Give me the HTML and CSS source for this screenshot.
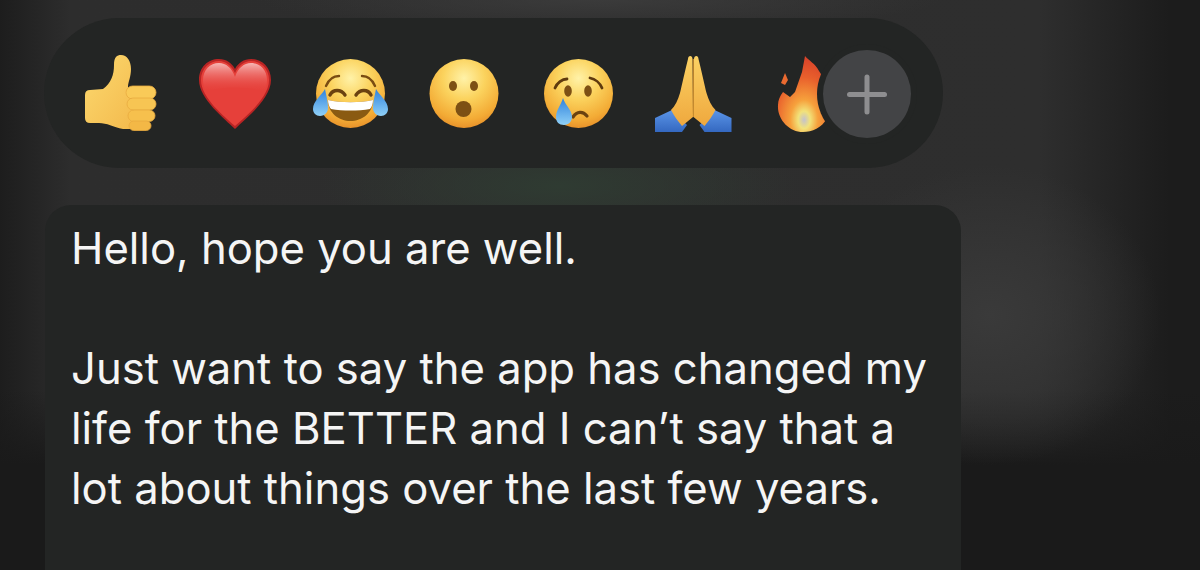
FILE: index.html
```html
<!DOCTYPE html>
<html lang="en">
<head>
<meta charset="UTF-8">
<title>Message reactions</title>
<link rel="stylesheet" href="styles.css">
</head>
<body>
<svg class="defs" width="0" height="0" aria-hidden="true">
  <defs>
    <radialGradient id="face" cx="50%" cy="28%" r="75%">
      <stop offset="0" stop-color="#fff2a8"/>
      <stop offset=".4" stop-color="#fbd35e"/>
      <stop offset=".8" stop-color="#f3ab35"/>
      <stop offset="1" stop-color="#e58c28"/>
    </radialGradient>
    <linearGradient id="tear" x1="0" y1="0" x2="0" y2="1">
      <stop offset="0" stop-color="#2f82dc"/>
      <stop offset="1" stop-color="#8fd0f7"/>
    </linearGradient>
    <linearGradient id="shine" x1="0" y1="0" x2="0" y2="1">
      <stop offset="0" stop-color="#f6b6b4"/>
      <stop offset="1" stop-color="#e8453f" stop-opacity="0"/>
    </linearGradient>
    <linearGradient id="skin" x1="0" y1="0" x2="1" y2="1">
      <stop offset="0" stop-color="#fcd96f"/>
      <stop offset="1" stop-color="#f3b94c"/>
    </linearGradient>
    <linearGradient id="palm" x1="0" y1="0" x2="0" y2="1">
      <stop offset="0" stop-color="#fbd264"/>
      <stop offset="1" stop-color="#efa83e"/>
    </linearGradient>
    <linearGradient id="sleeve" x1="0" y1="0" x2="0" y2="1">
      <stop offset="0" stop-color="#5b95e8"/>
      <stop offset="1" stop-color="#3468c0"/>
    </linearGradient>
    <radialGradient id="flame" cx="50%" cy="84%" r="82%">
      <stop offset="0" stop-color="#c4c2cc"/>
      <stop offset=".14" stop-color="#f2e27a"/>
      <stop offset=".32" stop-color="#f6a13c"/>
      <stop offset=".68" stop-color="#e9602c"/>
      <stop offset="1" stop-color="#d9432a"/>
    </radialGradient>
  </defs>
</svg>

<div class="reaction-tray">
  <div class="emoji">
    <svg viewBox="0 0 80 80">
      <path d="M4 42Q4 37 9 37L22 36C30 30 33 22 33 12C33 4 36 2 40 2C46 2 50 8 50 16C50 24 47 29 47 34L56 76L42 76C32 74 26 70 18 70L9 70Q4 70 4 65Z" fill="url(#skin)"/>
      <rect x="45" y="33" width="30" height="13" rx="6.500" fill="#f9ca58" stroke="#e9ab40" stroke-width=".8"/>
      <rect x="46" y="45" width="29" height="12" rx="6" fill="#f7c553" stroke="#e9ab40" stroke-width=".8"/>
      <rect x="47" y="57" width="27" height="11.500" rx="5.700" fill="#f6c04d" stroke="#e9ab40" stroke-width=".8"/>
      <rect x="48" y="68" width="22" height="9.500" rx="4.700" fill="#f3b846" stroke="#e9ab40" stroke-width=".8"/>
    </svg>
  </div>
  <div class="emoji">
    <svg viewBox="0 0 80 80">
      <path d="M40 76C30 66 4 46 4 27C4 14 13 6 24 6C31 6 37 10 40 16C43 10 49 6 56 6C67 6 76 14 76 27C76 46 50 66 40 76Z" fill="#b82424"/>
      <path d="M40 73C30 64 6 45 6 27C6 15 15 8 24 8C31 8 37 13 40 20C43 13 49 8 56 8C65 8 74 15 74 27C74 45 50 64 40 73Z" fill="#e6403a"/>
      <path d="M40 24C37 15 31 10 24 10C15 10 8 17 8 27C8 31 9 35 11 39C22 33 58 33 69 39C71 35 72 31 72 27C72 17 65 10 56 10C49 10 43 15 40 24Z" fill="url(#shine)"/>
    </svg>
  </div>
  <div class="emoji">
    <svg viewBox="0 0 80 80">
      <circle cx="40.500" cy="40.500" r="34.500" fill="url(#face)"/>
      <path d="M16 33C19 26 24 23 29 23M65 33C62 26 57 23 52 23" fill="none" stroke="#7a4c12" stroke-width="2.400" stroke-linecap="round"/>
      <path d="M20 42C23 36 31 36 35 42M46 42C50 36 58 36 61 42" fill="none" stroke="#6b4210" stroke-width="3.400" stroke-linecap="round"/>
      <path d="M18 47C30 50 51 50 63 47C63 60 52 68 40.500 68C29 68 18 60 18 47Z" fill="#8a5a12"/>
      <path d="M18 47C30 50 51 50 63 47C63 50 62 54 60 56C48 58 33 58 21 56C19 54 18 50 18 47Z" fill="#fff"/>
      <path d="M15 36C12 42 3 48 3 56C3 60 6 63 10 63C15 63 18 59 18 55C18 48 16 42 15 36Z" fill="url(#tear)"/>
      <path d="M66 36C69 42 78 48 78 56C78 60 75 63 71 63C66 63 63 59 63 55C63 48 65 42 66 36Z" fill="url(#tear)"/>
    </svg>
  </div>
  <div class="emoji">
    <svg viewBox="0 0 80 80">
      <circle cx="40" cy="40.500" r="34.500" fill="url(#face)"/>
      <ellipse cx="29" cy="33" rx="4" ry="5" fill="#7d5014"/>
      <ellipse cx="50" cy="33" rx="4" ry="5" fill="#7d5014"/>
      <circle cx="39.500" cy="56" r="8" fill="#7d5014"/>
    </svg>
  </div>
  <div class="emoji">
    <svg viewBox="0 0 80 80">
      <circle cx="40.500" cy="40.500" r="34.500" fill="url(#face)"/>
      <path d="M17 35C19 30 24 26 29 26M52 25C57 26 62 30 64 35" fill="none" stroke="#5f3a0e" stroke-width="2.800" stroke-linecap="round"/>
      <ellipse cx="30" cy="38" rx="3.800" ry="5.800" fill="#7d5014"/>
      <ellipse cx="50" cy="38" rx="3.800" ry="5.800" fill="#7d5014"/>
      <path d="M35 64C39 58 45 58 49 63" fill="none" stroke="#6b4210" stroke-width="3.200" stroke-linecap="round"/>
      <path d="M25 45C27 52 34 57 34 64C34 69 30 72 26 72C21 72 18 69 18 64C18 57 23 52 25 45Z" fill="url(#tear)"/>
    </svg>
  </div>
  <div class="emoji">
    <svg viewBox="0 0 80 80">
      <path d="M2 65L19 57L34 72L29 79L2 79Z" fill="url(#sleeve)"/>
      <path d="M78.500 65L61.500 57L46.500 72L51.500 79L78.500 79Z" fill="url(#sleeve)"/>
      <path d="M35 6C35 2 39.500 2 39.500 6L40 64L29 73C25 68 21 63 18 57C22 53 25 47 27 40C29 32 31 22 35 6Z" fill="url(#palm)"/>
      <path d="M45.500 6C45.500 2 41 2 41 6L40.500 64L51.500 73C55.500 68 59.500 63 62.500 57C58.500 53 55.500 47 53.500 40C51.500 32 49.500 22 45.500 6Z" fill="url(#palm)"/>
      <path d="M40.300 6V64" stroke="#d9952f" stroke-width="1"/>
    </svg>
  </div>
  <div class="emoji">
    <svg viewBox="0 0 80 80">
      <path d="M38 3C42 8 48 10 52 18C60 30 68 50 60 65C55 75 45 79 36 79C22 79 10 66 11 52C11 47 13 43 16 39L23 44L28 39L35 19Z" fill="url(#flame)"/>
      <path d="M18 20L21 27L18 32L14 30Z" fill="#ea6a30"/>
    </svg>
  </div>
  <button class="add-reaction" aria-label="Add reaction"></button>
</div>

<div class="bubble">
  <p>Hello, hope you are well.</p>
  <p>Just want to say the app has changed my life for the BETTER and I can’t say that a lot about things over the last few years.</p>
</div>
</body>
</html>
```

FILE: styles.css
```css
html, body {
  margin: 0;
  padding: 0;
  height: 570px;
  overflow: hidden;
}
body {
  box-sizing: border-box;
  padding: 18px 239px 0 44px;
  font-family: Inter, "Liberation Sans", Arial, sans-serif;
  background-color: #2b2b2b;
  background-image:
    radial-gradient(ellipse 170px 150px at 990px 315px, #3a3a3a, rgba(58, 58, 58, 0) 100%),
    linear-gradient(to bottom, rgba(26, 26, 26, 0) 390px, #1a1a1a 465px),
    radial-gradient(ellipse 340px 30px at 600px 0, #3b3b3b, rgba(59, 59, 59, 0) 100%),
    radial-gradient(ellipse 240px 60px at 560px 186px, #2f3b32, rgba(47, 59, 50, 0) 100%),
    linear-gradient(to right, #1d1d1d 0, #2d2d2d 70px, #2e2e2e 1040px, #1c1c1c 1170px);
}
.defs {
  position: absolute;
}

.reaction-tray {
  position: relative;
  display: flex;
  align-items: center;
  box-sizing: border-box;
  width: 899px;
  height: 150px;
  padding-left: 20px;
  border-radius: 75px;
  background-color: #232524;
}
.emoji {
  flex: 0 0 114.300px;
  display: flex;
  justify-content: center;
}
.emoji svg {
  display: block;
  width: 80px;
  height: 80px;
  filter: blur(.4px);
}
.add-reaction {
  position: absolute;
  left: 779px;
  top: 32px;
  width: 88px;
  height: 88px;
  padding: 0;
  border: none;
  border-radius: 50%;
  background-color: #434446;
  box-shadow: 0 0 0 6px #232524;
}
.add-reaction::before,
.add-reaction::after {
  content: "";
  position: absolute;
  left: 24px;
  top: 41.500px;
  width: 40px;
  height: 5px;
  border-radius: 3px;
  background-color: #8e8e90;
}
.add-reaction::after {
  transform: rotate(90deg);
}

.bubble {
  box-sizing: border-box;
  width: 916px;
  height: 420px;
  margin: 37px 0 0 1px;
  padding: 14px 26px;
  border-radius: 26px;
  background-color: #232524;
  color: #f5f5f5;
  font-size: 43.600px;
  line-height: 60px;
}
.bubble p {
  margin: 0 0 60px;
}
```
